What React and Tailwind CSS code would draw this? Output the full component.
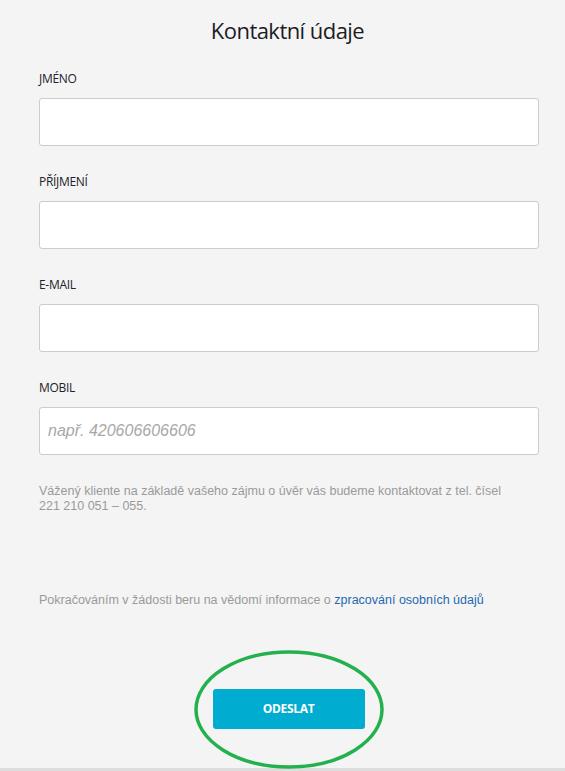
export default function App() {
  const fields = [
    { label: 'JMÉNO' },
    { label: 'PŘÍJMENÍ' },
    { label: 'E-MAIL' },
    { label: 'MOBIL', placeholder: 'např. 420606606606' },
  ];

  return (
    <div className="w-[565px] h-[771px] bg-[#f4f4f4] flex flex-col overflow-hidden" style={{ fontFamily: '"Open Sans", sans-serif' }}>
      <h1 className="text-center text-[22px] text-[#1c1c24] leading-none pt-[19px] pl-[10px] tracking-tight">
        Kontaktní údaje
      </h1>

      <div className="pl-[39px] w-[539px] mt-[32px] flex flex-col">
        <div className="flex flex-col gap-[30px]">
          {fields.map((f) => (
            <div key={f.label} className="flex flex-col">
              <label className="text-[12px] text-[#22222a] leading-none h-[12px] tracking-[-0.3px]">{f.label}</label>
              <input
                type="text"
                placeholder={f.placeholder || ''}
                className="mt-[13px] h-[48px] w-full rounded-[3px] border border-[#cccccc] bg-white px-[8px] text-[16px] italic placeholder-[#a8a8a8] outline-none"
                style={{ fontFamily: '"Liberation Sans", Arial, sans-serif' }}
              />
            </div>
          ))}
        </div>

        <p className="text-[12.5px] leading-[15px] text-[#9a9a9a] mt-[29px]" style={{ fontFamily: '"Liberation Sans", Arial, sans-serif' }}>
          Vážený kliente na základě vašeho zájmu o úvěr vás budeme kontaktovat z tel. čísel
          <br />
          221 210 051 – 055.
        </p>

        <p className="text-[12.5px] leading-[15px] text-[#9a9a9a] mt-[79px]" style={{ fontFamily: '"Liberation Sans", Arial, sans-serif' }}>
          Pokračováním v žádosti beru na vědomí informace o{' '}
          <a className="text-[#1d6ab0]">zpracování osobních údajů</a>
        </p>
      </div>

      <div className="flex justify-center mt-[81px] pl-[12px]">
        <div className="relative">
          <button className="w-[152px] h-[40px] rounded-[3px] bg-[#00acd0] text-white text-[12px] font-bold tracking-tight">
            ODESLAT
          </button>
          <svg className="absolute left-[-19px] top-[-39px] pointer-events-none" width="190" height="119" viewBox="0 0 190 119">
            <ellipse cx="95" cy="59.5" rx="93" ry="57.5" fill="none" stroke="#22b14c" strokeWidth="3.5" />
          </svg>
        </div>
      </div>

      <div className="flex-1" />
      <div className="h-[3px] bg-[#dddddd]" />
    </div>
  );
}
